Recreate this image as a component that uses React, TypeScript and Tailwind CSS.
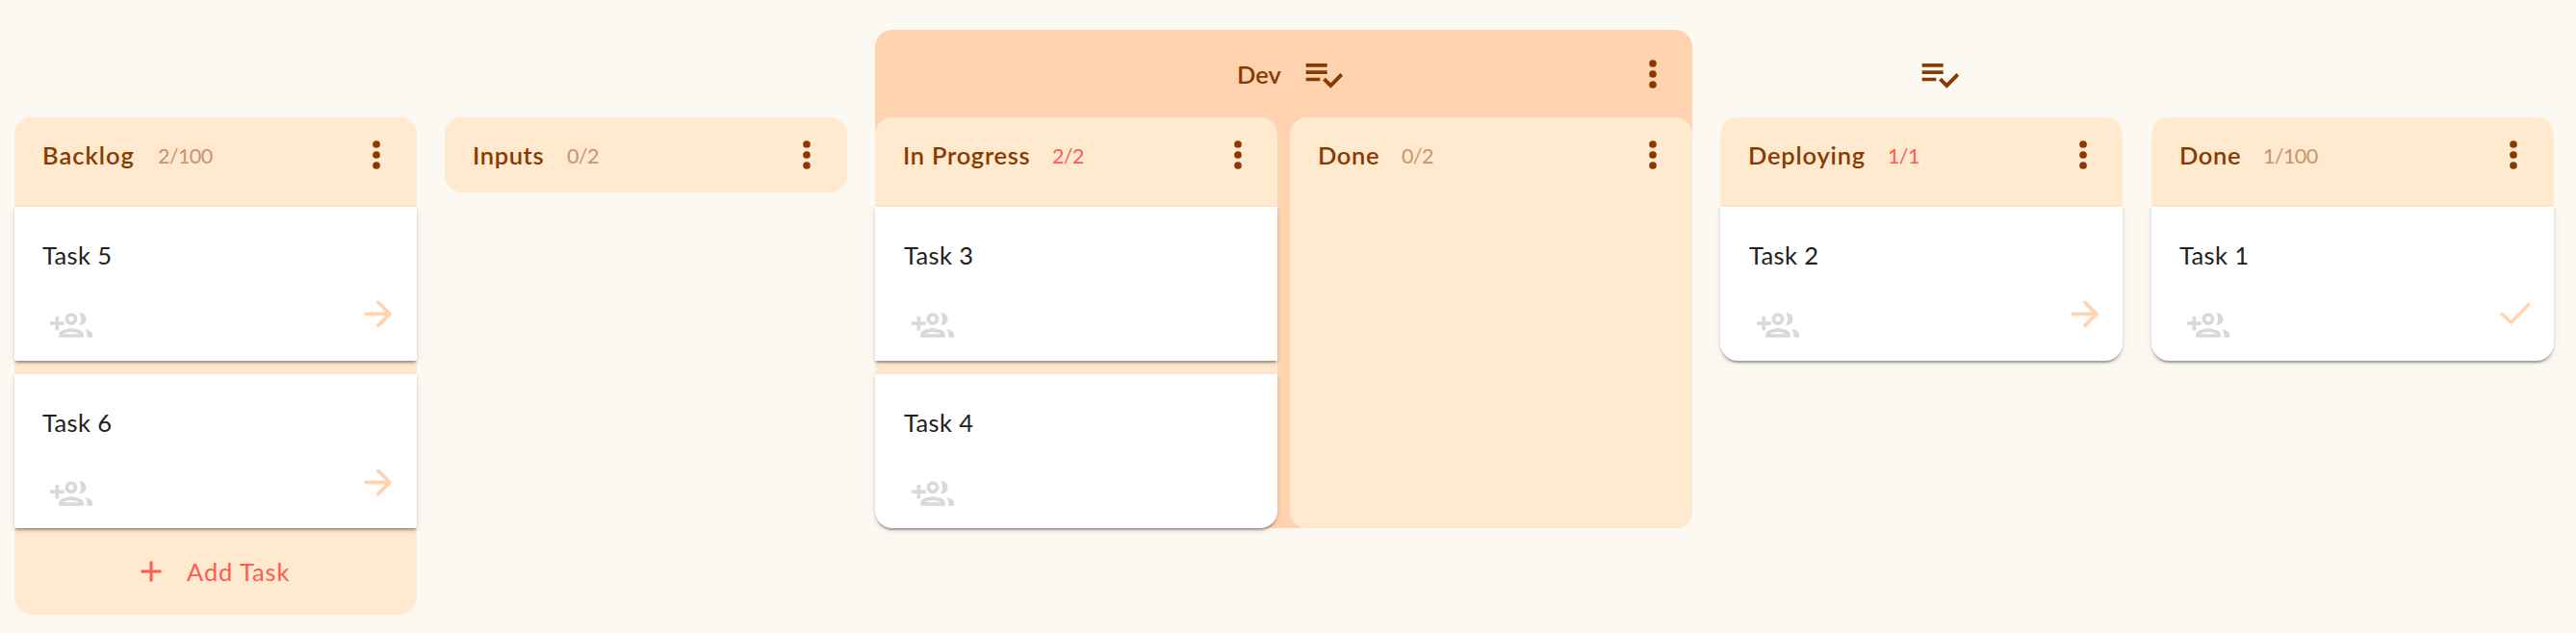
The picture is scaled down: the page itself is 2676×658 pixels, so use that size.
import React from "react";

type IconProps = { className?: string };

const MoreVert = ({ className = "" }: IconProps) => (
  <svg viewBox="0 0 24 24" className={`size-11 shrink-0 text-[#8a3a00] ${className}`} fill="currentColor">
    <circle cx="12" cy="6" r="2.1" />
    <circle cx="12" cy="12" r="2.1" />
    <circle cx="12" cy="18" r="2.1" />
  </svg>
);

const ListCheck = () => (
  <svg viewBox="0 0 24 24" className="size-11 shrink-0 text-[#8a3a00]" fill="currentColor">
    <path d="M14 10H2v2h12v-2zm0-4H2v2h12V6zM2 16h8v-2H2v2zm19.5-4.5L23 13l-6.99 7-4.51-4.5L13 14l3.01 3 5.49-5.5z" />
  </svg>
);

const GroupAdd = () => (
  <svg viewBox="0 0 24 24" className="size-11 shrink-0 text-[#d9d9d9]" fill="currentColor">
    <path d="M5 7H3v3H0v2h3v3h2v-3h3v-2H5z" />
    <path d="M12 13.75c-2.34 0-7 1.17-7 3.5V19h14v-1.75c0-2.33-4.66-3.5-7-3.5zM7.34 17c.84-.58 2.87-1.25 4.66-1.25s3.82.67 4.66 1.25H7.34zM12 12c1.93 0 3.5-1.57 3.5-3.5S13.93 5 12 5 8.5 6.57 8.5 8.5 10.07 12 12 12zm0-5c.83 0 1.5.67 1.5 1.5S12.83 10 12 10s-1.5-.67-1.5-1.5S11.17 7 12 7z" />
    <path d="M16.5 11.92c.21.04.43.08.5.08 1.93 0 3.5-1.57 3.5-3.5S18.93 5 17 5c-.17 0-.34.02-.5.04.63.98 1 2.18 1 3.46s-.37 2.46-1 3.42zM19.6 14.16c.84.8 1.4 1.8 1.4 3.09V19h3v-1.75c0-1.6-2.2-2.7-4.4-3.09z" />
  </svg>
);

const ArrowRight = () => (
  <svg viewBox="0 0 24 24" className="size-11 shrink-0 text-[#ffd3b0]" fill="none" stroke="currentColor" strokeWidth="2.1" strokeLinecap="round" strokeLinejoin="round">
    <path d="M5.6 12.2h13.4M12.5 5.7l6.5 6.5-6.5 6.5" />
  </svg>
);

const Check = () => (
  <svg viewBox="0 0 24 24" className="size-11 shrink-0 text-[#ffd3b0]" fill="none" stroke="currentColor" strokeWidth="1.9" strokeLinecap="round" strokeLinejoin="miter">
    <path d="M5 12.2l5 4.8L20 7" />
  </svg>
);

const Plus = () => (
  <svg viewBox="0 0 24 24" className="size-9 shrink-0" fill="currentColor">
    <path d="M19 13h-6v6h-2v-6H5v-2h6V5h2v6h6v2z" />
  </svg>
);

type Task = { name: string; action?: "next" | "done"; rounded?: boolean; low?: boolean };

function Card({ name, action, rounded, low, inset }: Task & { inset?: boolean }) {
  return (
    <article
      className={`flex h-40 flex-col bg-white shadow-[0_4px_2px_-2px_rgba(0,0,0,0.2),0_2px_2px_0_rgba(0,0,0,0.14),0_2px_6px_0_rgba(0,0,0,0.12)] ${inset ? "pl-[30px]" : "pl-[29px]"} ${rounded ? "rounded-b-[18px]" : ""}`}
    >
      <p className="mt-[34px] h-8 text-[25.5px] leading-8 tracking-[0.4px] text-[#212121]">{name}</p>
      <div
        className={`flex items-start justify-between pl-2 ${inset ? "pr-[18px]" : "pr-[19px]"} ${low ? "mt-[24px]" : "mt-[23px]"}`}
      >
        <span className="mt-3">
          <GroupAdd />
        </span>
        {action === "next" && <ArrowRight />}
        {action === "done" && <Check />}
      </div>
    </article>
  );
}

type ColumnProps = {
  title: string;
  titleClass: string;
  count: string;
  full?: boolean;
  inset?: boolean;
  tasks?: Task[];
  className?: string;
  children?: React.ReactNode;
};

function Column({ title, titleClass, count, full, inset, tasks = [], className = "", children }: ColumnProps) {
  return (
    <section className={`w-[418px] shrink-0 rounded-[18px] bg-[#ffe9cf] ${className}`}>
      <header className={`flex h-[78px] items-center pl-[29px] ${inset ? "pr-[19px]" : "pr-5"}`}>
        <h2 className={`shrink-0 text-[25.5px] leading-8 font-semibold whitespace-nowrap text-[#8a3a00] ${titleClass}`}>{title}</h2>
        <span className={`pt-px text-[21.5px] leading-8 tracking-[-0.6px] ${full ? "text-[#ff5b50]" : "text-[#c7946c]"}`}>
          {count}
        </span>
        <MoreVert className="ml-auto" />
      </header>
      {tasks.length > 0 && (
        <div className="flex flex-col gap-3.5 pt-[15px]">
          {tasks.map((t) => (
            <Card key={t.name} {...t} inset={inset} />
          ))}
        </div>
      )}
      {children}
    </section>
  );
}

export default function App() {
  return (
    <main className="flex h-[658px] w-[2676px] items-start overflow-hidden bg-[#fcf9f2] pl-[15px] font-['Lato',sans-serif]">
      <Column
        className="mt-[122px]"
        title="Backlog"
        titleClass="w-[120px] tracking-[1px]"
        count="2/100"
        tasks={[
          { name: "Task 5", action: "next" },
          { name: "Task 6", action: "next", low: true },
        ]}
      >
        <button className="flex h-[90px] w-full items-center pl-[124px] text-[25.5px] tracking-[0.9px] text-[#ff5b50]">
          <Plus />
          <span className="ml-[19px]">Add Task</span>
        </button>
      </Column>

      <Column className="mt-[122px] ml-[29px]" title="Inputs" titleClass="w-[98px] tracking-[0.6px]" count="0/2" />

      <section className="mt-[31px] ml-[29px] w-[849px] shrink-0 rounded-[18px] bg-[#ffd3b0]">
        <header className="flex h-[91px] items-center pr-[19px] pl-[376px]">
          <h2 className="w-[68px] text-[25.5px] leading-8 font-semibold text-[#8a3a00]">Dev</h2>
          <ListCheck />
          <MoreVert className="ml-auto" />
        </header>
        <div className="flex justify-between">
          <Column
            title="In Progress"
            titleClass="w-[155px] tracking-[0.7px]"
            count="2/2"
            full
            inset
            tasks={[{ name: "Task 3" }, { name: "Task 4", low: true, rounded: true }]}
          />
          <Column title="Done" titleClass="w-[87px] tracking-[0.6px]" count="0/2" inset />
        </div>
      </section>

      <div className="mt-[31px] ml-[29px] shrink-0">
        <div className="flex h-[91px] items-center pl-[206px]">
          <ListCheck />
        </div>
        <Column
          title="Deploying"
          titleClass="w-[145px] tracking-[0.8px]"
          count="1/1"
          full
          inset
          tasks={[{ name: "Task 2", action: "next", rounded: true }]}
        />
      </div>

      <Column
        className="mt-[122px] ml-[30px]"
        title="Done"
        titleClass="w-[87px] tracking-[0.6px]"
        count="1/100"
        tasks={[{ name: "Task 1", action: "done", rounded: true }]}
      />
    </main>
  );
}
